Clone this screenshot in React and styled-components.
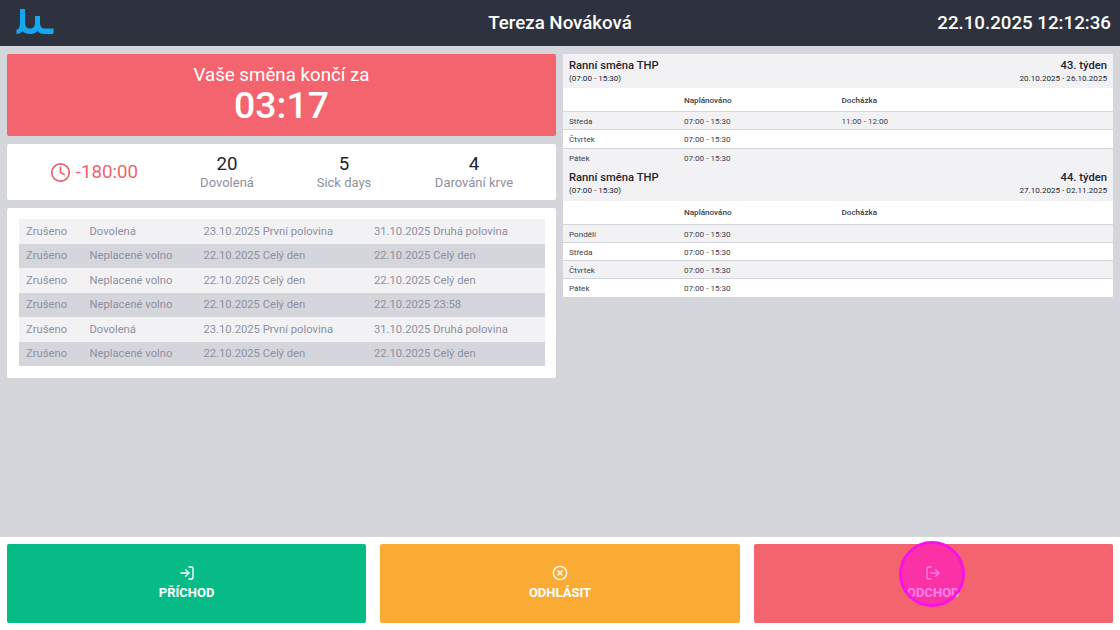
import React from "react";
import styled, { createGlobalStyle } from "styled-components";
import { LogIn, LogOut, CircleX, Clock } from "lucide-react";

const Global = createGlobalStyle`
  html, body { margin: 0; padding: 0; }
  body { font-family: Roboto, "Liberation Sans", sans-serif; }
  * { box-sizing: border-box; }
`;

const Page = styled.div`
  width: 1120px;
  height: 630px;
  display: flex;
  flex-direction: column;
  background: #d5d6db;
  position: relative;
  overflow: hidden;
`;
const Header = styled.header`
  height: 46px;
  background: #2d323e;
  color: #fff;
  display: grid;
  grid-template-columns: 1fr auto 1fr;
  align-items: center;
  padding: 0 9px;
`;
const Logo = styled.svg`
  width: 38px;
  height: 26px;
  display: block;
  margin: 0 0 2px 7px;
`;
const Name = styled.div`
  font-size: 18.72px;
  font-weight: 500;
`;
const DateTime = styled.div`
  font-size: 18.72px;
  font-weight: 500;
  text-align: right;
`;
const Main = styled.main`
  flex: 1;
  display: grid;
  grid-template-columns: 549px 550px;
  gap: 7px;
  padding: 8px 7px 0;
  align-items: start;
`;
const Column = styled.div`
  display: flex;
  flex-direction: column;
  gap: 8px;
`;
const Countdown = styled.div`
  height: 82px;
  border-radius: 2px;
  background: #f4646e;
  color: #fff;
  display: flex;
  flex-direction: column;
  align-items: center;
  padding-top: 10px;
`;
const CountdownLabel = styled.div`
  font-size: 18.72px;
  line-height: 22px;
`;
const CountdownTime = styled.div`
  font-size: 37.44px;
  font-weight: 500;
  line-height: 38px;
`;
const Stats = styled.div`
  height: 56px;
  background: #fff;
  border-radius: 2px;
  display: grid;
  grid-template-columns: 174px 92px 142px 118px;
  align-items: center;
`;
const Balance = styled.div`
  display: flex;
  align-items: center;
  justify-content: center;
  gap: 5px;
  color: #ec636d;
  font-size: 18.72px;
`;
const Stat = styled.div`
  display: flex;
  flex-direction: column;
  align-items: center;
`;
const StatValue = styled.div`
  font-size: 18.72px;
  line-height: 22px;
  color: #22252f;
`;
const StatLabel = styled.div`
  font-size: 13px;
  line-height: 16px;
  color: #8f909f;
`;
const ListCard = styled.div`
  background: #fff;
  border-radius: 2px;
  padding: 11px 11px 12px 12px;
`;
const ListRow = styled.div`
  display: grid;
  grid-template-columns: 63.5px 114px 170.5px 1fr;
  height: 24.5px;
  align-items: center;
  padding-left: 7px;
  font-size: 11.23px;
  color: #8f909f;
  background: ${(p) => (p.$dark ? "#d5d6db" : "#f2f2f5")};
`;
const ShiftCard = styled.div`
  background: #fff;
  border-radius: 2px;
  overflow: hidden;
`;
const WeekHead = styled.div`
  height: 34px;
  padding: 4.5px 6px 0;
  background: #f2f2f5;
  display: flex;
  justify-content: space-between;
  color: #22252f;
`;
const WeekSide = styled.div`
  display: flex;
  flex-direction: column;
  text-align: ${(p) => (p.$right ? "right" : "left")};
`;
const WeekTitle = styled.div`
  font-size: 11.23px;
  font-weight: 500;
  line-height: 14px;
`;
const WeekSub = styled.div`
  font-size: 8.1px;
  line-height: 11px;
`;
const ShiftRow = styled.div`
  display: grid;
  grid-template-columns: 115px 157.5px 1fr;
  align-items: center;
  height: ${(p) => (p.$head ? "24.4px" : "18.1px")};
  padding-left: 6px;
  font-size: 8.1px;
  font-weight: ${(p) => (p.$head ? 500 : 400)};
  color: #3a3d49;
  background: ${(p) => (p.$alt ? "#f2f2f5" : "#fff")};
  border-bottom: ${(p) => (p.$last ? "none" : "1px solid #d5d6db")};
`;
const Footer = styled.footer`
  height: 93px;
  background: #fff;
  display: grid;
  grid-template-columns: repeat(3, 1fr);
  gap: 14px;
  padding: 7px 7px;
`;
const ActionButton = styled.div`
  background: ${(p) => p.$color};
  border-radius: 2px;
  color: #fff;
  font-size: 13px;
  font-weight: 700;
  display: flex;
  flex-direction: column;
  align-items: center;
  justify-content: center;
  gap: 4px;
  padding-bottom: 2px;
`;
const TouchMark = styled.div`
  position: absolute;
  left: 899px;
  top: 541px;
  width: 66px;
  height: 66px;
  border-radius: 50%;
  background: rgba(255, 0, 220, 0.5);
  border: 3px solid #f812e8;
`;

const absences = [
  ["Zrušeno", "Dovolená", "23.10.2025 První polovina", "31.10.2025 Druhá polovina"],
  ["Zrušeno", "Neplacené volno", "22.10.2025 Celý den", "22.10.2025 Celý den"],
  ["Zrušeno", "Neplacené volno", "22.10.2025 Celý den", "22.10.2025 Celý den"],
  ["Zrušeno", "Neplacené volno", "22.10.2025 Celý den", "22.10.2025 23:58"],
  ["Zrušeno", "Dovolená", "23.10.2025 První polovina", "31.10.2025 Druhá polovina"],
  ["Zrušeno", "Neplacené volno", "22.10.2025 Celý den", "22.10.2025 Celý den"],
];

const weeks = [
  {
    week: "43. týden",
    range: "20.10.2025 - 26.10.2025",
    days: [
      ["Středa", "11:00 - 12:00"],
      ["Čtvrtek", ""],
      ["Pátek", ""],
    ],
  },
  {
    week: "44. týden",
    range: "27.10.2025 - 02.11.2025",
    days: [
      ["Pondělí", ""],
      ["Středa", ""],
      ["Čtvrtek", ""],
      ["Pátek", ""],
    ],
  },
];

const App = () => {
  return (
    <Page>
      <Global />
      <Header>
        <Logo viewBox="0 0 38 26">
          <path
            d="M4 0 H9 V13 C9 18 11 19.5 14 19.5 C17 19.5 19 18 19 13 V7 H24 V13 C24 18 26 19.5 29 19.5 H37.5 V25 H28 C25 25 23 24 21.5 22 C20 24 18 25 14 25 C11 25 8 24 6.5 22 C5 24 3 25 0.5 25 V20.5 C3 20.5 4 18 4 13 Z"
            fill="#14a8ee"
          />
        </Logo>
        <Name>Tereza Nováková</Name>
        <DateTime>22.10.2025 12:12:36</DateTime>
      </Header>
      <Main>
        <Column>
          <Countdown>
            <CountdownLabel>Vaše směna končí za</CountdownLabel>
            <CountdownTime>03:17</CountdownTime>
          </Countdown>
          <Stats>
            <Balance>
              <Clock size={21} strokeWidth={2} />
              -180:00
            </Balance>
            <Stat>
              <StatValue>20</StatValue>
              <StatLabel>Dovolená</StatLabel>
            </Stat>
            <Stat>
              <StatValue>5</StatValue>
              <StatLabel>Sick days</StatLabel>
            </Stat>
            <Stat>
              <StatValue>4</StatValue>
              <StatLabel>Darování krve</StatLabel>
            </Stat>
          </Stats>
          <ListCard>
            {absences.map((row, i) => (
              <ListRow key={i} $dark={i % 2 === 1}>
                {row.map((cell, j) => (
                  <div key={j}>{cell}</div>
                ))}
              </ListRow>
            ))}
          </ListCard>
        </Column>
        <ShiftCard>
          {weeks.map((w) => (
            <div key={w.week}>
              <WeekHead>
                <WeekSide>
                  <WeekTitle>Ranní směna THP</WeekTitle>
                  <WeekSub>(07:00 - 15:30)</WeekSub>
                </WeekSide>
                <WeekSide $right>
                  <WeekTitle>{w.week}</WeekTitle>
                  <WeekSub>{w.range}</WeekSub>
                </WeekSide>
              </WeekHead>
              <ShiftRow $head>
                <div />
                <div>Naplánováno</div>
                <div>Docházka</div>
              </ShiftRow>
              {w.days.map(([day, attendance], i) => (
                <ShiftRow
                  key={day}
                  $alt={i % 2 === 0}
                  $last={i === w.days.length - 1}
                >
                  <div>{day}</div>
                  <div>07:00 - 15:30</div>
                  <div>{attendance}</div>
                </ShiftRow>
              ))}
            </div>
          ))}
        </ShiftCard>
      </Main>
      <Footer>
        <ActionButton $color="#06bb85">
          <LogIn size={16} />
          PŘÍCHOD
        </ActionButton>
        <ActionButton $color="#faab34">
          <CircleX size={16} />
          ODHLÁSIT
        </ActionButton>
        <ActionButton $color="#f4646e">
          <LogOut size={16} />
          ODCHOD
        </ActionButton>
      </Footer>
      <TouchMark />
    </Page>
  );
};

export default App;
